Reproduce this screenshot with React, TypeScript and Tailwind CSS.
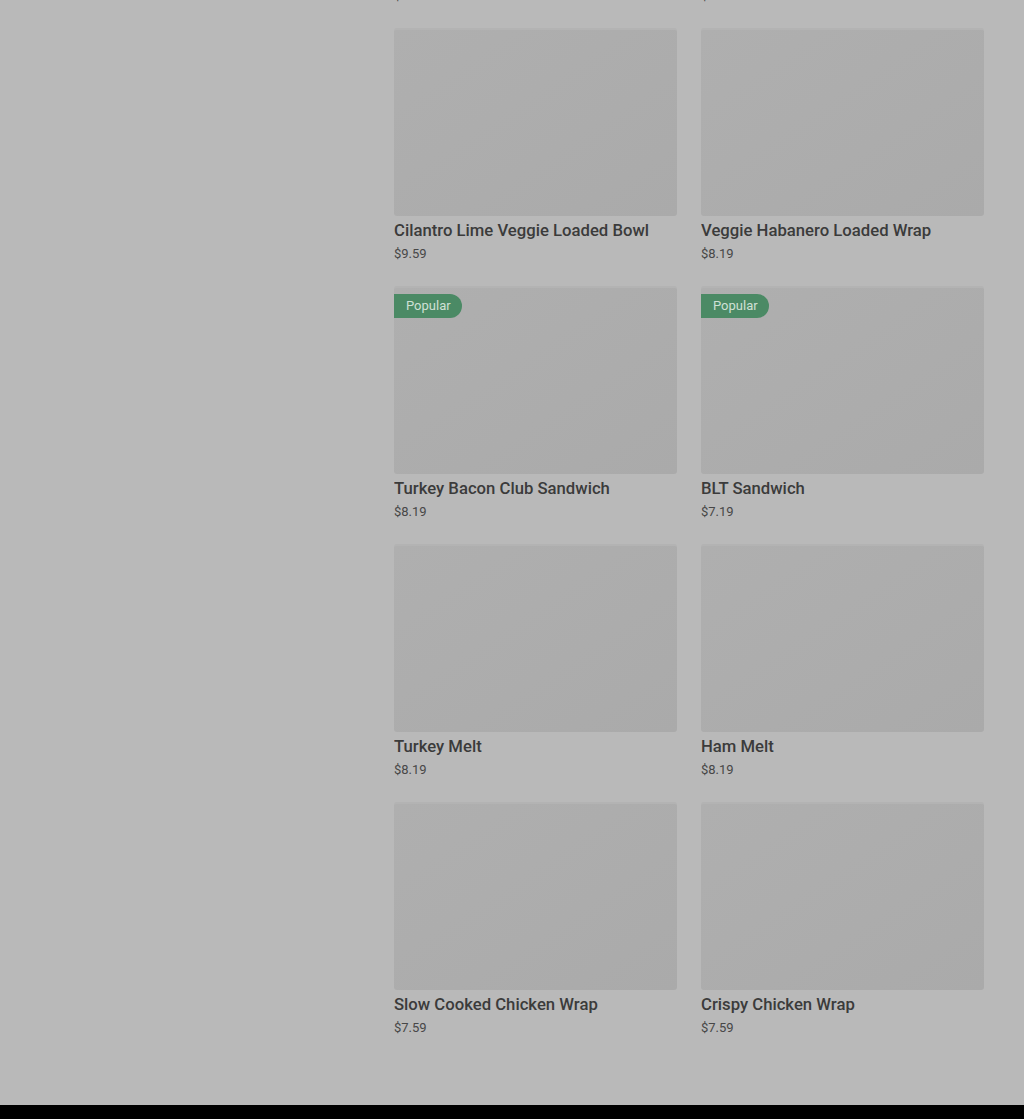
import React from 'react';

type Item = { name: string; price: string; popular?: boolean };

const items: Item[] = [
  { name: 'Chipotle Chicken Loaded Wrap', price: '$8.19' },
  { name: 'Southwest Veggie Loaded Bowl', price: '$8.19' },
  { name: 'Cilantro Lime Veggie Loaded Bowl', price: '$9.59' },
  { name: 'Veggie Habanero Loaded Wrap', price: '$8.19' },
  { name: 'Turkey Bacon Club Sandwich', price: '$8.19', popular: true },
  { name: 'BLT Sandwich', price: '$7.19', popular: true },
  { name: 'Turkey Melt', price: '$8.19' },
  { name: 'Ham Melt', price: '$8.19' },
  { name: 'Slow Cooked Chicken Wrap', price: '$7.59' },
  { name: 'Crispy Chicken Wrap', price: '$7.59' },
];

const ItemCard: React.FC<{ item: Item }> = ({ item }) => (
  <div className="flex flex-col">
    <div className="relative h-[188px] rounded-[3px] border-t-2 border-[#b3b3b3] bg-gradient-to-br from-[#afafaf] to-[#aaaaaa]">
      {item.popular && (
        <span className="absolute left-0 top-[6px] h-[24px] pl-[12px] pr-[11px] rounded-r-full bg-[#4b8a65] text-[#cfe0d5] text-[13px] leading-[24px]">
          Popular
        </span>
      )}
    </div>
    <h4 className="mt-[3px] text-[16.7px] leading-6 font-medium text-[#3b3b3b] truncate">{item.name}</h4>
    <p className="mt-[2px] text-[13px] leading-[18px] text-[#474747]">{item.price}</p>
  </div>
);

export default function App() {
  return (
    <div className="min-h-screen bg-[#b9b9b9] font-['Roboto','Liberation_Sans',sans-serif] overflow-hidden">
      <div className="flex">
        <aside className="w-[394px] shrink-0" />
        <main className="w-[590px] mt-[-230px] pb-[68px]">
          <div className="grid grid-cols-2 gap-x-6 gap-y-[23px]">
            {items.map(item => <ItemCard key={item.name} item={item} />)}
          </div>
        </main>
      </div>
      <footer className="h-[200px] bg-black" />
    </div>
  );
}
